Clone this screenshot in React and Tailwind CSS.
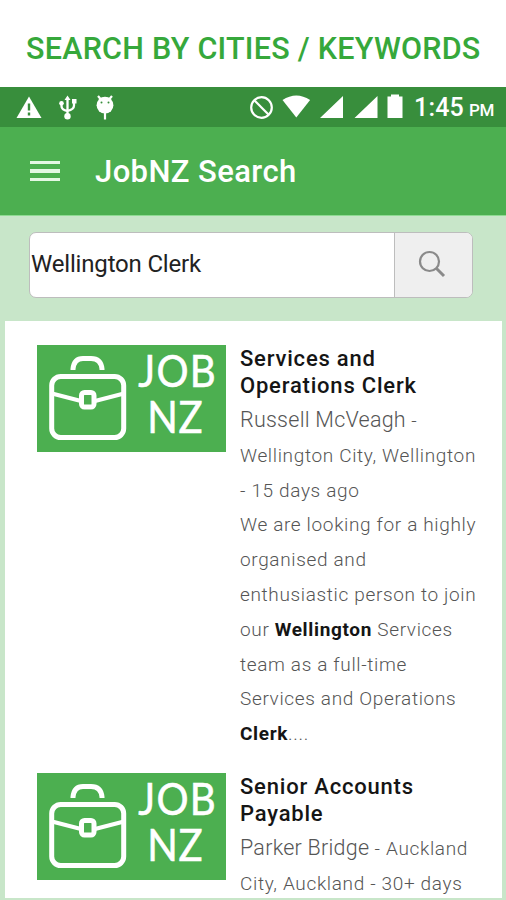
import React from "react";

function StatusBar() {
  return (
    <div className="flex h-[40px] shrink-0 items-center bg-[#388e3c] text-white">
      <svg className="block h-[40px] w-[410px] shrink-0" viewBox="0 0 410 40" fill="#fff">
        <path d="M29 9.5 41.5 31h-25z" />
        <path d="M29 16.5v7M29 25.5v3" stroke="#388e3c" strokeWidth="2.4" />
        <g stroke="#fff" strokeWidth="2.3" fill="none">
          <path d="M67.500 12v18M61.500 17v2q0 4 6 5M74 15v3.500q0 4-6.500 5.500" />
        </g>
        <path d="M67.500 8.500l3 4.500h-6zM72 12h4.500v4.500H72z" />
        <circle cx="61.500" cy="16.200" r="2.300" />
        <circle cx="67.500" cy="29.300" r="3.200" />
        <circle cx="105" cy="18.200" r="8.400" />
        <path d="M98 9l3 3.500M112 9l-3 3.500M105 25v7.500" stroke="#fff" strokeWidth="2.200" />
        <circle cx="101.500" cy="15.500" r="1" fill="#388e3c" />
        <circle cx="108.500" cy="15.500" r="1" fill="#388e3c" />
        <circle cx="261.500" cy="20.500" r="10.300" fill="none" stroke="#fff" strokeWidth="2.200" />
        <path d="M254.300 13.300l14.400 14.400" stroke="#fff" strokeWidth="2.200" />
        <path d="M282.500 13q13.800-9 27.600 0L296.300 30.500z" />
        <path d="M343 9v22h-23zM377.500 9v22h-23z" />
        <path d="M387.500 9.500h3.500V7.500h8v2h3.500V31h-15z" />
      </svg>
      <span className="ml-[4px] whitespace-pre pt-[2px] text-[25px] font-medium leading-[38px] tracking-[0.2px]">1:45</span>
      <span className="ml-[5px] pt-[7px] text-[17px] font-medium leading-[33px] tracking-[-0.3px]">PM</span>
    </div>
  );
}

function Logo() {
  return (
    <svg className="block h-[107px] w-[189px] shrink-0 overflow-visible bg-[#4caf50]" viewBox="0 0 189 107">
      <g fill="none" stroke="#fff" strokeWidth="5" strokeLinejoin="round">
        <rect x="14.700" y="31.500" width="72" height="61" rx="9" />
        <path d="M62.5 25v-1q1-10.500 10-10.500" stroke="none" />
        <path d="M37 25v-1q1-10.500 10-10.500h8q10 0 11 10.500v1" transform="translate(-1 0)" />
        <path d="M15 48.500l29 7.500M87 48.500l-29 7.500" strokeWidth="4" />
        <rect x="44.500" y="47.500" width="12.500" height="14.500" rx="3" fill="#4caf50" />
      </g>
      <g fill="#fff" stroke="#fff" strokeWidth="0.6" fontFamily="Lato, sans-serif" fontSize="44.500" transform="scale(0.9 1)">
        <text x="112.500" y="41.700" textLength="86" lengthAdjust="spacing">JOB</text>
        <text x="122.500" y="88.200" textLength="61.500" lengthAdjust="spacing">NZ</text>
      </g>
    </svg>
  );
}

function Job({ title, children }) {
  return (
    <article className="flex gap-[14px] pl-[32px]">
      <Logo />
      <div className="w-[262px] shrink-0 whitespace-nowrap text-[#555]">
        <h2 className="text-[22px] font-medium leading-[27px] tracking-[0.8px] text-[#151515]">{title}</h2>
        <div className="mt-[4px] text-[19px] font-light leading-[34.800px] tracking-[0.65px]">{children}</div>
      </div>
    </article>
  );
}

export default function App() {
  return (
    <main className="flex h-[900px] w-[506px] flex-col overflow-hidden bg-[#c8e6c9] font-['Roboto',sans-serif]">
      <div className="flex h-[87px] shrink-0 items-center bg-white pl-[26px] pt-[10px]">
        <h1 className="whitespace-nowrap text-[30.500px] font-medium leading-[40px] tracking-[0.25px] text-[#36a83b]">SEARCH BY CITIES / KEYWORDS</h1>
      </div>
      <StatusBar />
      <header className="flex h-[89px] shrink-0 items-center border-b border-[#8edb92] bg-[#4caf50] pl-[30px] text-white">
        <div className="flex flex-col gap-[5px]">
          <i className="h-[3.500px] w-[30px] bg-[#e4f8e4]" />
          <i className="h-[3.500px] w-[30px] bg-[#e4f8e4]" />
          <i className="h-[3.500px] w-[30px] bg-[#e4f8e4]" />
        </div>
        <span className="ml-[35px] whitespace-nowrap pt-[2px] text-[31px] font-medium leading-[40px] tracking-[0.4px]">JobNZ Search</span>
      </header>
      <div className="flex h-[105px] shrink-0 pl-[29px] pt-[16px]">
        <div className="flex h-[66px] w-[444px] overflow-hidden rounded-[7px] border border-[#bdbdbd] bg-white">
          <div className="w-[365px] border-r border-[#bdbdbd] pl-px text-[24px] leading-[62px] tracking-[-0.18px] text-[#222]">Wellington Clerk</div>
          <div className="flex flex-1 items-center justify-center bg-[#efefef] pb-[2px] pr-[4px]">
            <svg width="28" height="28" viewBox="0 0 28 28" fill="none" stroke="#8a8a8a" strokeWidth="2.200">
              <circle cx="11.500" cy="11.500" r="9.500" />
              <path d="M18 18l8 8" strokeWidth="3" />
            </svg>
          </div>
        </div>
      </div>
      <section className="ml-[5px] flex h-[577px] w-[497px] shrink-0 flex-col overflow-hidden bg-white pt-[24px]">
        <div className="h-[428px] shrink-0">
          <Job title={<>Services and<br />Operations Clerk</>}>
            <span className="text-[21.500px] tracking-[0.25px]">Russell McVeagh</span> -<br />
            Wellington City, Wellington<br />
            - 15 days ago<br />
            We are looking for a highly<br />
            organised and<br />
            enthusiastic person to join<br />
            our <b className="font-bold text-[#151515]">Wellington</b> Services<br />
            team as a full-time<br />
            Services and Operations<br />
            <b className="font-bold text-[#151515]">Clerk</b>....
          </Job>
        </div>
        <Job title={<>Senior Accounts<br />Payable</>}>
          <span className="text-[21.500px] tracking-[0.25px]">Parker Bridge</span> - Auckland<br />
          City, Auckland - 30+ days
        </Job>
      </section>
    </main>
  );
}
